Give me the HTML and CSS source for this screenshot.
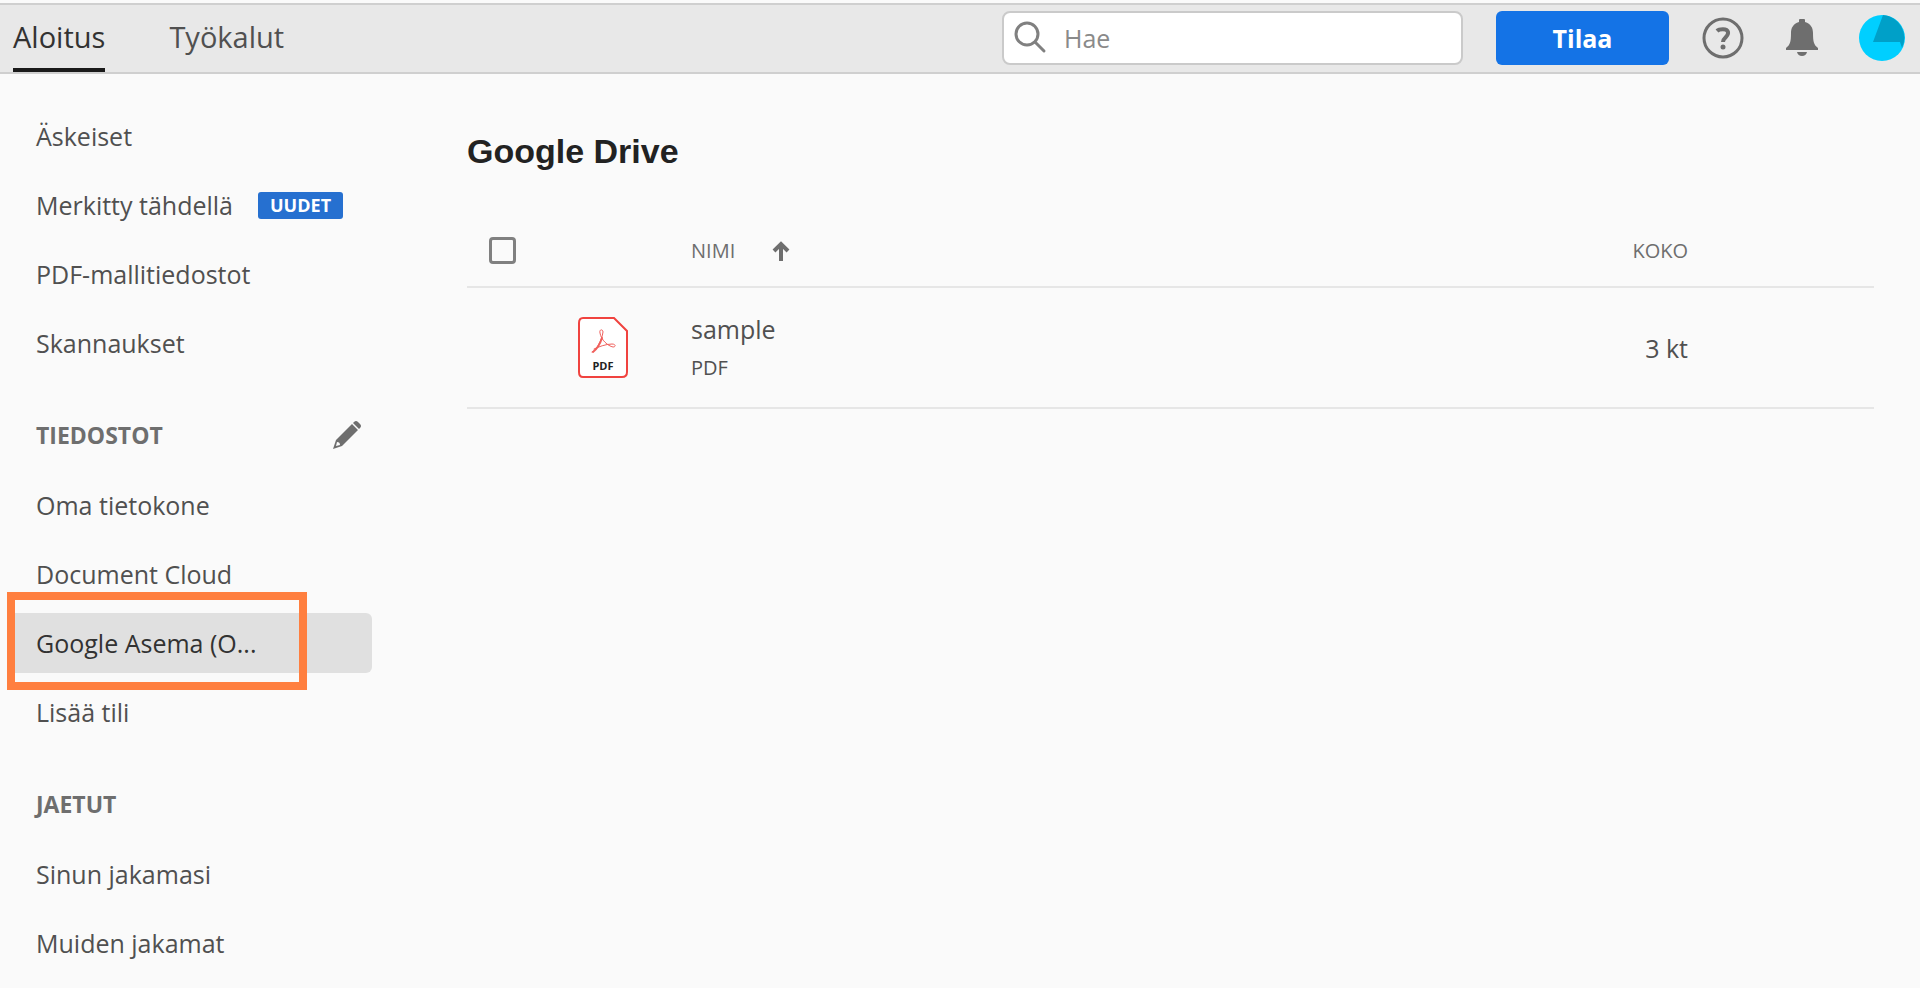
FILE: index.html
```
<!DOCTYPE html>
<html lang="fi">

<head>
    <meta charset="UTF-8">
    <meta name="viewport" content="width=device-width, initial-scale=1.0">
    <title>Google Drive</title>
    <link rel="stylesheet" href="styles.css">
</head>

<body>
    <header class="topbar">
        <nav class="tabs">
            <a href="#" class="tab active">Aloitus</a>
            <a href="#" class="tab">Työkalut</a>
        </nav>

        <div class="topbar-right">
            <label class="search">
                <svg width="34" height="34" viewBox="0 0 34 34" fill="none" stroke="#808080" stroke-width="3" stroke-linecap="round">
                    <circle cx="13" cy="13" r="11" />
                    <path d="M21 21l9 9" />
                </svg>
                <input type="search" placeholder="Hae" aria-label="Hae">
            </label>
            <button type="button" class="subscribe-btn">Tilaa</button>
            <button type="button" class="icon-btn help" aria-label="Ohje">
                <svg width="42" height="42" viewBox="0 0 42 42" fill="none" stroke="#6e6e6e" stroke-width="3">
                    <circle cx="21" cy="21" r="19" />
                    <path d="M15 14c2-2 10-3 11 1 1 5-5 5-5 10" stroke-width="4" />
                    <circle cx="21" cy="30" r="2.5" fill="#6e6e6e" stroke="none" />
                </svg>
            </button>
            <button type="button" class="icon-btn bell" aria-label="Ilmoitukset">
                <svg width="34" height="40" viewBox="0 0 34 40" fill="#6e6e6e">
                    <path d="M14 4V2q0-1 1-1h4q1 0 1 1v2c6 2 8 6 8 11 0 9 1 12 5 15v2H1v-2c4-3 5-6 5-15 0-5 2-9 8-11z" />
                    <path d="M12 34h10q-1 4-5 4t-5-4z" />
                </svg>
            </button>
            <button type="button" class="icon-btn avatar" aria-label="Profiili">
                <svg width="46" height="46" viewBox="0 0 46 46">
                    <circle cx="23" cy="23" r="23" fill="#00cfff" />
                    <path d="M24 0A23 23 0 0 1 43 33L41 27H14z" fill="#00a0c8" />
                </svg>
            </button>
        </div>
    </header>

    <div class="layout">
        <!-- Left navigation -->
        <nav class="sidebar">
            <a href="#" class="nav-item">Äskeiset</a>
            <a href="#" class="nav-item">Merkitty tähdellä <span class="badge">UUDET</span></a>
            <a href="#" class="nav-item">PDF-mallitiedostot</a>
            <a href="#" class="nav-item">Skannaukset</a>

            <div class="nav-heading">
                <h2>TIEDOSTOT</h2>
                <button type="button" class="icon-btn" aria-label="Muokkaa">
                    <svg width="30" height="30" viewBox="0 0 30 30" fill="#6e6e6e">
                        <path d="M20 4l6 6L10 26 1 29l3-9zM5 22l-1 4 4-1q0-3-3-3z" fill-rule="evenodd" />
                        <path d="M21 3l1-1q2-2 4 0l2 2q2 2 0 4l-1 1z" />
                    </svg>
                </button>
            </div>
            <a href="#" class="nav-item">Oma tietokone</a>
            <a href="#" class="nav-item">Document Cloud</a>
            <a href="#" class="nav-item selected">Google Asema (O...</a>
            <a href="#" class="nav-item">Lisää tili</a>

            <div class="nav-heading">
                <h2>JAETUT</h2>
            </div>
            <a href="#" class="nav-item">Sinun jakamasi</a>
            <a href="#" class="nav-item">Muiden jakamat</a>
        </nav>

        <!-- File list -->
        <main class="content">
            <h1>Google Drive</h1>
            <table class="files">
                <thead>
                    <tr>
                        <th class="col-check"><input type="checkbox" aria-label="Valitse kaikki"></th>
                        <th class="col-icon"></th>
                        <th class="col-name">
                            <button type="button" class="sort-btn">NIMI
                                <svg width="18" height="22" viewBox="0 0 18 22" fill="none" stroke="#6e6e6e" stroke-width="4">
                                    <path d="M9 21V4M2 11l7-7 7 7" />
                                </svg>
                            </button>
                        </th>
                        <th class="col-size">KOKO</th>
                    </tr>
                </thead>
                <tbody>
                    <tr>
                        <td class="col-check"></td>
                        <td class="col-icon">
                            <svg width="52" height="64" viewBox="0 0 52 64">
                                <path d="M6 2h31l13 13v41q0 5-5 5H6q-4 0-4-5V7q0-5 4-5z" fill="#fff" stroke="#f0433f" stroke-width="2" />
                                <g fill="none" stroke="#f0605c" stroke-linecap="round">
                                    <path d="M15 36c4-1 10-12 11-20 0-3-4-3-3 1 1 7 8 13 13 14 3 0 3-3-1-3-6 0-14 3-18 5" stroke-width="1" />
                                    <path d="M16 36c4-3 7-8 9-14" stroke-width="2" />
                                </g>
                                <text x="26" y="54" class="pdf-label">PDF</text>
                            </svg>
                        </td>
                        <td class="col-name">
                            <a href="#" class="file-name">sample</a>
                            <div class="file-type">PDF</div>
                        </td>
                        <td class="col-size">3 kt</td>
                    </tr>
                </tbody>
            </table>
        </main>
    </div>
</body>

</html>
```

FILE: styles.css
```
*,
*::after {
    box-sizing: border-box;
}

body {
    margin: 0;
    padding-top: 3px;
    font-family: "Segoe UI", "Open Sans", sans-serif;
    font-size: 25px;
    color: #505050;
    background-color: #fafafa;
}

a {
    color: inherit;
    text-decoration: none;
}

button {
    font-family: inherit;
    cursor: pointer;
}

svg {
    display: block;
}

/* Top bar */
.topbar {
    display: flex;
    justify-content: space-between;
    height: 71px;
    padding: 0 15px 0 13px;
    background-color: #e8e8e8;
    border-top: 2px solid #cfcfcf;
    border-bottom: 2px solid #cfcfcf;
}

.tabs {
    display: flex;
    gap: 64px;
}

.tab {
    display: flex;
    align-items: center;
    font-size: 29px;
    border-bottom: 4px solid transparent;
}

.tab.active {
    color: #323232;
    border-bottom-color: #1a1a1a;
}

.topbar-right {
    display: flex;
    align-items: center;
    padding-bottom: 2px;
}

.search {
    display: flex;
    align-items: center;
    gap: 16px;
    width: 461px;
    height: 54px;
    padding: 0 10px;
    background-color: #fff;
    border: 2px solid #cacaca;
    border-radius: 8px;
}

.search input {
    flex: 1;
    min-width: 0;
    padding: 0;
    border: none;
    outline: none;
    background: none;
    font-family: inherit;
    font-size: 25px;
}

.search input::placeholder {
    color: #8a8a8a;
}

.subscribe-btn {
    width: 173px;
    height: 54px;
    margin-left: 33px;
    border: none;
    border-radius: 6px;
    background-color: #1473e6;
    color: #fff;
    font-size: 25px;
    font-weight: bold;
}

.icon-btn {
    padding: 0;
    border: none;
    background: none;
}

.help {
    margin-left: 33px;
}

.bell {
    margin-left: 41px;
}

.avatar {
    margin-left: 40px;
}

/* Sidebar */
.layout {
    display: flex;
}

.sidebar {
    display: flex;
    flex-direction: column;
    flex-shrink: 0;
    gap: 9px;
    width: 372px;
    padding: 32px 0 14px 9px;
}

.nav-item {
    position: relative;
    display: flex;
    align-items: center;
    height: 60px;
    padding-left: 27px;
    border-radius: 6px;
}

.nav-item.selected {
    color: #323232;
    background-color: #e0e0e0;
}

/* Orange frame round the selected account */
.nav-item.selected::after {
    content: "";
    position: absolute;
    top: -21px;
    left: -2px;
    width: 300px;
    height: 98px;
    border: 8px solid #ff7f3f;
}

.badge {
    margin-left: 25px;
    padding: 0 12px;
    border-radius: 3px;
    background-color: #2670d0;
    color: #fff;
    font-size: 18px;
    font-weight: bold;
    line-height: 27px;
}

.nav-heading {
    display: flex;
    align-items: center;
    justify-content: space-between;
    height: 62px;
    margin-top: 22px;
    padding: 0 10px 0 27px;
}

.nav-heading h2 {
    margin: 0;
    color: #6e6e6e;
    font-size: 23px;
}

/* File list */
.content {
    flex: 1;
    padding: 57px 46px 0 95px;
}

.content h1 {
    margin: 0;
    color: #222;
    font-family: "Liberation Sans", Arial, sans-serif;
    font-size: 34px;
    line-height: 40px;
}

.files {
    width: 100%;
    margin-top: 44px;
    border-collapse: collapse;
}

.files th,
.files td {
    padding: 0;
    border-bottom: 2px solid #e6e6e6;
    text-align: left;
}

.files th {
    height: 72px;
    color: #6e6e6e;
    font-size: 20px;
    font-weight: normal;
}

.files td {
    height: 121px;
}

.files .col-check {
    width: 110px;
    padding-left: 22px;
}

.col-check input {
    display: block;
    appearance: none;
    width: 27px;
    height: 27px;
    margin: 0;
    border: 3px solid #808080;
    border-radius: 4px;
}

.files .col-icon {
    width: 114px;
}

.files .col-size {
    width: 300px;
    padding-right: 186px;
    text-align: right;
}

.sort-btn {
    display: flex;
    align-items: center;
    gap: 37px;
    padding: 0;
    border: none;
    background: none;
    color: inherit;
    font-size: 20px;
}

.file-name {
    display: block;
    line-height: 40px;
}

.file-type {
    font-size: 20px;
    line-height: 38px;
}

.pdf-label {
    fill: #222;
    font-family: "Open Sans", sans-serif;
    font-size: 11px;
    font-weight: bold;
    text-anchor: middle;
}
```
